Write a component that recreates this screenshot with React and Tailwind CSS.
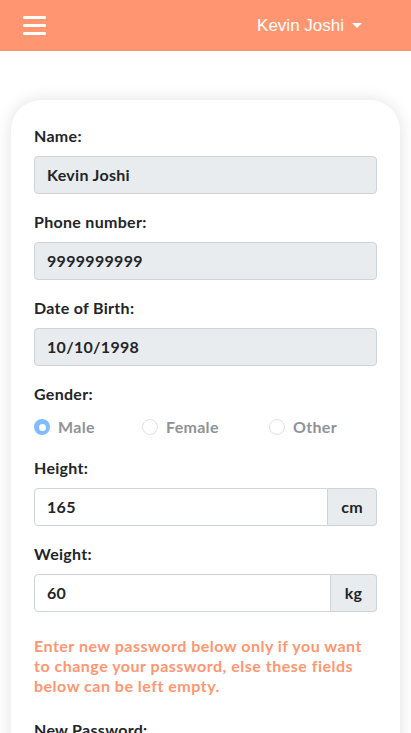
import React from "react";

const font = { fontFamily: "Lato, 'Noto Sans', sans-serif" };

function Label({ children }) {
  return <div className="text-[16px] leading-6 font-bold text-[#212529] mb-2">{children}</div>;
}

function ReadOnly({ value }) {
  return (
    <div className="h-[38px] rounded-[4px] border border-[#ced4da] bg-[#e9ecef] px-3 flex items-center text-[16px] font-bold text-[#212529]">
      {value}
    </div>
  );
}

function Group({ value, unit, unitW }) {
  return (
    <div className="flex h-[38px]">
      <div className="flex-1 rounded-l-[4px] border border-[#ced4da] bg-white px-3 flex items-center text-[16px] font-bold text-[#212529]">
        {value}
      </div>
      <div className={`${unitW} rounded-r-[4px] border border-l-0 border-[#ced4da] bg-[#e9ecef] flex items-center justify-center text-[16px] font-bold text-[#212529]`}>
        {unit}
      </div>
    </div>
  );
}

function Radio({ label, checked, w }) {
  return (
    <div className={`flex items-center gap-2 ${w}`}>
      {checked ? (
        <span className="w-4 h-4 rounded-full bg-[#80bdff] flex items-center justify-center">
          <span className="w-[7px] h-[7px] rounded-full bg-white" />
        </span>
      ) : (
        <span className="w-4 h-4 rounded-full border border-[#dee2e6] bg-white" />
      )}
      <span className="text-[16px] leading-6 font-bold text-[#8f9396]">{label}</span>
    </div>
  );
}

export default function App() {
  return (
    <div style={font} className="min-h-[733px] bg-white tracking-[0.3px]">
      <header className="h-[51px] bg-[#ff9671] flex items-center justify-between pl-[23px] pr-[49px]">
        <div className="flex flex-col gap-[5px] w-[23px]">
          <span className="h-[3px] bg-white rounded-[1px]" />
          <span className="h-[3px] bg-white rounded-[1px]" />
          <span className="h-[3px] bg-white rounded-[1px]" />
        </div>
        <div className="flex items-center gap-[8px] text-white text-[17px] tracking-normal" style={{ fontFamily: "'Liberation Sans', Arial, sans-serif" }}>
          <span>Kevin Joshi</span>
          <span className="w-0 h-0 border-l-[5px] border-r-[5px] border-t-[5px] border-l-transparent border-r-transparent border-t-white" />
        </div>
      </header>

      <div className="px-[11px] pt-[49px]">
        <div className="rounded-[30px] bg-white shadow-[0_0_16px_rgba(0,0,0,0.12)] px-[23px] pt-[24px] pb-10">
          <div className="mb-4">
            <Label>Name:</Label>
            <ReadOnly value="Kevin Joshi" />
          </div>
          <div className="mb-4">
            <Label>Phone number:</Label>
            <ReadOnly value="9999999999" />
          </div>
          <div className="mb-4">
            <Label>Date of Birth:</Label>
            <ReadOnly value="10/10/1998" />
          </div>
          <div className="mb-4">
            <Label>Gender:</Label>
            <div className="flex items-center h-[26px]">
              <Radio label="Male" checked w="w-[108px]" />
              <Radio label="Female" w="w-[127px]" />
              <Radio label="Other" />
            </div>
          </div>
          <div className="mb-4">
            <Label>Height:</Label>
            <Group value="165" unit="cm" unitW="w-[49px]" />
          </div>
          <div className="mb-6">
            <Label>Weight:</Label>
            <Group value="60" unit="kg" unitW="w-[46px]" />
          </div>
          <p className="text-[16px] leading-5 font-bold text-[#ff9671] tracking-[0.5px] mb-[22px]">
            Enter new password below only if you want to change your password, else these fields below can be left empty.
          </p>
          <div className="mb-4">
            <Label>New Password:</Label>
            <div className="h-[38px] rounded-[4px] border border-[#ced4da] bg-white" />
          </div>
        </div>
      </div>
    </div>
  );
}
